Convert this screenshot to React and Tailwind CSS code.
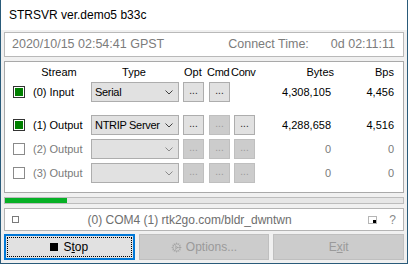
import React from "react";
import { Cog } from "lucide-react";

const streams = [
  { id: 0, label: "(0) Input", type: "Serial", on: true, opt: true, cmd: true, conv: false, bytes: "4,308,105", bps: "4,456" },
  { id: 1, label: "(1) Output", type: "NTRIP Server", on: true, opt: true, cmd: false, conv: true, bytes: "4,288,658", bps: "4,516" },
  { id: 2, label: "(2) Output", type: "", on: false, opt: false, cmd: false, conv: false, bytes: "0", bps: "0" },
  { id: 3, label: "(3) Output", type: "", on: false, opt: false, cmd: false, conv: false, bytes: "0", bps: "0" },
];

const Chevron = ({ dim }) => (
  <svg width="8" height="5" viewBox="0 0 8 5" className="shrink-0">
    <path d="M0.5 0.5 L4 4 L7.5 0.5" fill="none" stroke={dim ? "#8a8a8a" : "#404040"} strokeWidth="1" />
  </svg>
);

const DotBtn = ({ enabled, hidden }) => {
  if (hidden) return <div className="w-[21px] h-[20px]" />;
  return (
    <div
      className={
        enabled
          ? "w-[21px] h-[20px] border border-[#adadad] bg-[#e1e1e1] flex items-center justify-center text-[10px] leading-none text-[#222] pb-[3px]"
          : "w-[21px] h-[20px] border border-[#bfbfbf] bg-[#cccccc] flex items-center justify-center text-[10px] leading-none text-[#9a9a9a] pb-[3px]"
      }
    >
      ...
    </div>
  );
};

const Check = ({ on }) =>
  on ? (
    <div className="w-[12px] h-[12px] border border-[#333] bg-white p-[1px] shrink-0">
      <div className="w-full h-full bg-[#008000]" />
    </div>
  ) : (
    <div className="w-[12px] h-[12px] border border-[#8a8a8a] bg-white shrink-0" />
  );

const Row = ({ s, className }) => {
  const active = s.on;
  const txt = active ? "text-black" : "text-[#7a7a7a]";
  return (
    <div className={"flex items-center h-[20px] " + className}>
      <div className="w-[8px]" />
      <Check on={s.on} />
      <div className={"w-[66px] pl-[8px] whitespace-nowrap " + txt}>{s.label}</div>
      <div className="w-[88px] h-[20px] border border-[#adadad] bg-[#e1e1e1] flex items-center pl-[3px] pr-[5px]">
        <span className="flex-1 text-black whitespace-nowrap tracking-[-0.3px]">{s.type}</span>
        <Chevron dim={!active} />
      </div>
      <div className="w-[4px]" />
      <DotBtn enabled={s.opt} />
      <div className="w-[5px]" />
      <DotBtn enabled={s.cmd} />
      <div className="w-[4px]" />
      <DotBtn enabled={s.conv} hidden={s.id === 0} />
      <div className={"w-[76px] text-right " + txt}>{s.bytes}</div>
      <div className={"w-[63px] text-right " + txt}>{s.bps}</div>
    </div>
  );
};

export default function App() {
  return (
    <div className="w-[408px] h-[264px] border-x border-b border-[#2a5b7a] bg-[#f0f0f0] flex flex-col font-['Liberation_Sans',Arial,sans-serif] text-[11px] overflow-hidden">
      <div className="h-[30px] bg-white flex items-center pl-[8px] text-[12px] text-black shrink-0">
        STRSVR ver.demo5 b33c
      </div>
      <div className="flex flex-col px-[3px] pt-[2px] pb-[3px]">
        <div className="h-[25px] border border-[#b9b9b9] bg-white flex items-center pl-[7px] pr-[8px] text-[12.5px] text-[#7c7c7c]">
          <span>2020/10/15 02:54:41 GPST</span>
          <span className="ml-auto">Connect Time:</span>
          <span className="ml-[22px]">0d 02:11:11</span>
        </div>

        <div className="mt-[4px] h-[132px] border border-[#a9a9a9] bg-white flex flex-col">
          <div className="h-[20px] flex items-center text-black">
            <div className="w-[24px]" />
            <div className="w-[60px] text-center">Stream</div>
            <div className="w-[90px] text-center">Type</div>
            <div className="w-[28px] pl-[5px]">Opt</div>
            <div className="w-[24px] tracking-[-0.3px]">Cmd</div>
            <div className="w-[27px] tracking-[-0.3px]">Conv</div>
            <div className="w-[76px] text-right">Bytes</div>
            <div className="w-[60px] text-right">Bps</div>
          </div>
          <Row s={streams[0]} className="" />
          <Row s={streams[1]} className="mt-[13px]" />
          <Row s={streams[2]} className="mt-[4px]" />
          <Row s={streams[3]} className="mt-[4px]" />
        </div>

        <div className="mt-[4px] h-[7px] border border-[#bcbcbc] bg-[#e6e6e6]">
          <div className="h-full w-[62px] bg-[#06b025]" />
        </div>

        <div className="mt-[4px] h-[23px] border border-[#b4b4b4] bg-white flex items-center text-[12px] text-[#6e6e6e]">
          <div className="w-[7px]" />
          <div className="w-[7px] h-[7px] border border-[#7a7a7a]" />
          <div className="flex-1 text-center pr-[8px]">(0) COM4 (1) rtk2go.com/bldr_dwntwn</div>
          <svg width="9" height="8" viewBox="0 0 9 8" className="mr-[12px]">
            <rect x="0.5" y="0.5" width="8" height="7" fill="none" stroke="#6a6a6a" strokeWidth="1" strokeDasharray="1 1" />
            <rect x="5" y="4" width="3" height="3" fill="#000" />
          </svg>
          <span className="mr-[7px] text-[#8a8a8a]">?</span>
        </div>

        <div className="mt-[3px] h-[26px] grid grid-cols-3 gap-[4px] text-[12px]">
          <div className="border-2 border-[#0078d7] bg-[#e1e1e1] p-[1px]">
            <div className="h-full border border-dotted border-black flex items-center justify-center gap-[5px] text-black">
              <span className="w-[8px] h-[8px] bg-black" />
              <span>
                S<span className="underline">t</span>op
              </span>
            </div>
          </div>
          <div className="border border-[#bfbfbf] bg-[#cccccc] flex items-center justify-center gap-[4px] text-[#9a9a9a]">
            <Cog size={11} strokeWidth={1.5} color="#a0a0a0" />
            <span>Options...</span>
          </div>
          <div className="border border-[#bfbfbf] bg-[#cccccc] flex items-center justify-center text-[#9a9a9a]">
            <span>
              E<span className="underline">x</span>it
            </span>
          </div>
        </div>
      </div>
    </div>
  );
}
